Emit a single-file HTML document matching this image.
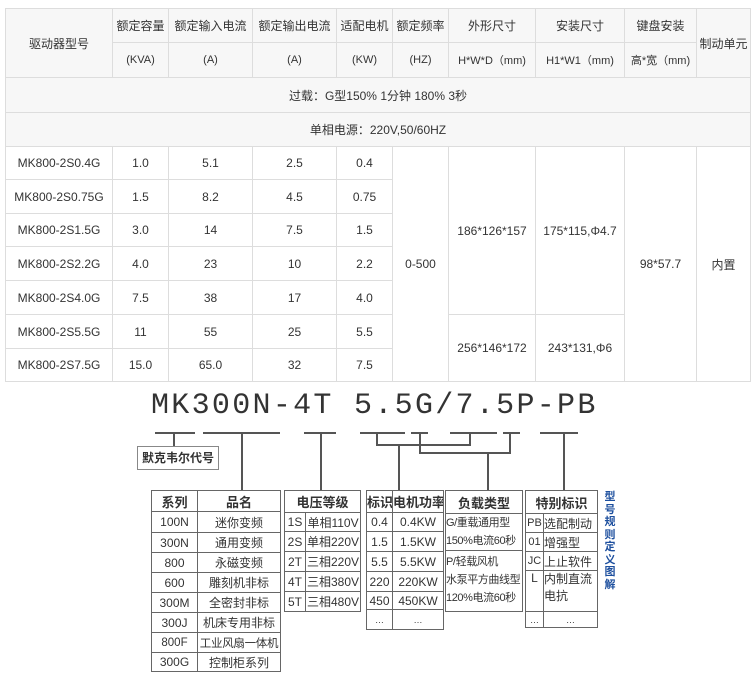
<!DOCTYPE html>
<html><head><meta charset="utf-8"><style>
*{margin:0;padding:0;box-sizing:border-box}
body{width:754px;height:694px;background:#fff;font-family:"Liberation Sans","Noto Sans CJK SC",sans-serif;color:#333;position:relative;overflow:hidden}
table.m{position:absolute;left:5px;top:8px;border-collapse:collapse;table-layout:fixed;width:745px;font-size:12px}
table.m td{border:1px solid #ddd;text-align:center;vertical-align:middle;padding:0;white-space:nowrap;overflow:hidden}
table.m tr.h td{background:#f7f7f7}
.a{position:absolute}
.hl{position:absolute;height:1.5px;background:#555}
.vl{position:absolute;width:1.5px;background:#555}
table.s{position:absolute;border-collapse:collapse;table-layout:fixed;font-size:12px;color:#333}
table.s td{border:1.5px solid #666;text-align:center;padding:0;white-space:nowrap;overflow:hidden}
table.s tr:first-child td{font-weight:bold;font-size:13px}
</style></head><body>
<table class="m">
<colgroup><col style="width:107px"><col style="width:56px"><col style="width:84px"><col style="width:84px"><col style="width:56px"><col style="width:56px"><col style="width:87px"><col style="width:89px"><col style="width:72px"><col style="width:54px"></colgroup>
<tr class="h" style="height:34px"><td rowspan="2">驱动器型号</td><td>额定容量</td><td>额定输入电流</td><td>额定输出电流</td><td>适配电机</td><td>额定频率</td><td>外形尺寸</td><td>安装尺寸</td><td>键盘安装</td><td rowspan="2">制动单元</td></tr>
<tr class="h" style="height:35px"><td style="font-size:11px">(KVA)</td><td style="font-size:11px">(A)</td><td style="font-size:11px">(A)</td><td style="font-size:11px">(KW)</td><td style="font-size:11px">(HZ)</td><td style="font-size:11px">H*W*D（mm)</td><td style="font-size:11px">H1*W1（mm)</td><td style="font-size:11px">高*宽（mm)</td></tr>
<tr class="h" style="height:35px"><td colspan="10">过载：G型150% 1分钟 180% 3秒</td></tr>
<tr class="h" style="height:34px"><td colspan="10">单相电源：220V,50/60HZ</td></tr>
<tr style="height:33px"><td>MK800-2S0.4G</td><td>1.0</td><td>5.1</td><td>2.5</td><td>0.4</td><td rowspan="7">0-500</td><td rowspan="5">186*126*157</td><td rowspan="5">175*115,Φ4.7</td><td rowspan="7">98*57.7</td><td rowspan="7">内置</td></tr>
<tr style="height:34px"><td>MK800-2S0.75G</td><td>1.5</td><td>8.2</td><td>4.5</td><td>0.75</td></tr>
<tr style="height:33px"><td>MK800-2S1.5G</td><td>3.0</td><td>14</td><td>7.5</td><td>1.5</td></tr>
<tr style="height:34px"><td>MK800-2S2.2G</td><td>4.0</td><td>23</td><td>10</td><td>2.2</td></tr>
<tr style="height:34px"><td>MK800-2S4.0G</td><td>7.5</td><td>38</td><td>17</td><td>4.0</td></tr>
<tr style="height:34px"><td>MK800-2S5.5G</td><td>11</td><td>55</td><td>25</td><td>5.5</td><td rowspan="2">256*146*172</td><td rowspan="2">243*131,Φ6</td></tr>
<tr style="height:33px"><td>MK800-2S7.5G</td><td>15.0</td><td>65.0</td><td>32</td><td>7.5</td></tr>
</table>

<div class="a" style="left:151px;top:389px;font-family:'Liberation Mono',monospace;font-size:30px;letter-spacing:2.3px;color:#333;line-height:34px">MK300N-4T 5.5G/7.5P-PB</div>

<div class="hl" style="left:155px;top:432px;width:40px"></div>
<div class="hl" style="left:203px;top:432px;width:77px"></div>
<div class="hl" style="left:304px;top:432px;width:32px"></div>
<div class="hl" style="left:360px;top:432px;width:45px"></div>
<div class="hl" style="left:411px;top:432px;width:17px"></div>
<div class="hl" style="left:450px;top:432px;width:47px"></div>
<div class="hl" style="left:503px;top:432px;width:17px"></div>
<div class="hl" style="left:540px;top:432px;width:38px"></div>

<div class="vl" style="left:173px;top:432px;height:14px"></div>
<div class="a" style="left:137px;top:446px;width:82px;height:24px;border:1px solid #888;font-size:12px;font-weight:bold;text-align:center;line-height:22px">默克韦尔代号</div>
<div class="vl" style="left:241px;top:432px;height:58px"></div>
<div class="vl" style="left:320px;top:432px;height:58px"></div>
<div class="vl" style="left:376px;top:432px;height:13px"></div>
<div class="hl" style="left:376px;top:444px;width:95px"></div>
<div class="vl" style="left:469px;top:432px;height:13px"></div>
<div class="vl" style="left:398px;top:444px;height:46px"></div>
<div class="vl" style="left:419px;top:432px;height:21px"></div>
<div class="hl" style="left:419px;top:452px;width:92px"></div>
<div class="vl" style="left:509px;top:432px;height:21px"></div>
<div class="vl" style="left:487px;top:452px;height:38px"></div>
<div class="vl" style="left:563px;top:432px;height:58px"></div>

<table class="s" style="left:151px;top:490px;width:129px">
<colgroup><col style="width:46px"><col style="width:83px"></colgroup>
<tr style="height:21px"><td>系列</td><td>品名</td></tr>
<tr style="height:21px"><td>100N</td><td>迷你变频</td></tr>
<tr style="height:20px"><td>300N</td><td>通用变频</td></tr>
<tr style="height:20px"><td>800</td><td>永磁变频</td></tr>
<tr style="height:20px"><td>600</td><td>雕刻机非标</td></tr>
<tr style="height:20px"><td>300M</td><td>全密封非标</td></tr>
<tr style="height:20px"><td>300J</td><td>机床专用非标</td></tr>
<tr style="height:20px"><td style="font-size:11.5px">800F</td><td style="font-size:11.5px;letter-spacing:-0.3px">工业风扇一体机</td></tr>
<tr style="height:19px"><td>300G</td><td>控制柜系列</td></tr>
</table>

<table class="s" style="left:284px;top:490px;width:76px">
<colgroup><col style="width:21px"><col style="width:55px"></colgroup>
<tr style="height:22px"><td colspan="2">电压等级</td></tr>
<tr style="height:19px"><td>1S</td><td>单相110V</td></tr>
<tr style="height:20px"><td>2S</td><td>单相220V</td></tr>
<tr style="height:20px"><td>2T</td><td>三相220V</td></tr>
<tr style="height:20px"><td>4T</td><td>三相380V</td></tr>
<tr style="height:20px"><td>5T</td><td>三相480V</td></tr>
</table>

<table class="s" style="left:366px;top:490px;width:77px">
<colgroup><col style="width:26px"><col style="width:51px"></colgroup>
<tr style="height:22px"><td>标识</td><td>电机功率</td></tr>
<tr style="height:19px"><td>0.4</td><td>0.4KW</td></tr>
<tr style="height:20px"><td>1.5</td><td>1.5KW</td></tr>
<tr style="height:20px"><td>5.5</td><td>5.5KW</td></tr>
<tr style="height:20px"><td>220</td><td>220KW</td></tr>
<tr style="height:18px"><td>450</td><td>450KW</td></tr>
<tr style="height:20px"><td style="font-size:9px">…</td><td style="font-size:9px">…</td></tr>
</table>

<table class="s" style="left:445px;top:490px;width:78px">
<tr style="height:23px"><td>负载类型</td></tr>
<tr style="height:37px"><td style="text-align:left;line-height:18px;font-size:11px;letter-spacing:-0.4px">G/重载通用型<br>150%电流60秒</td></tr>
<tr style="height:61px"><td style="text-align:left;vertical-align:top;line-height:18px;font-size:11px;letter-spacing:-0.4px;padding-top:2px">P/轻载风机<br>水泵平方曲线型<br>120%电流60秒</td></tr>
</table>

<table class="s" style="left:525px;top:490px;width:72px">
<colgroup><col style="width:18px"><col style="width:54px"></colgroup>
<tr style="height:23px"><td colspan="2">特别标识</td></tr>
<tr style="height:19px"><td style="font-size:11px">PB</td><td style="text-align:left">选配制动</td></tr>
<tr style="height:19px"><td style="font-size:11px">01</td><td style="text-align:left">增强型</td></tr>
<tr style="height:19px"><td style="font-size:11px">JC</td><td style="text-align:left">上止软件</td></tr>
<tr style="height:41px"><td style="vertical-align:top">L</td><td style="text-align:left;vertical-align:top;white-space:normal;line-height:17px">内制直流<br>电抗</td></tr>
<tr style="height:16px"><td style="font-size:9px">…</td><td style="font-size:9px">…</td></tr>
</table>

<div class="a" style="left:603px;top:491px;width:14px;font-size:11px;font-weight:bold;color:#1d4f9e;line-height:12.5px;text-align:center">型<br>号<br>规<br>则<br>定<br>义<br>图<br>解</div>
</body></html>
